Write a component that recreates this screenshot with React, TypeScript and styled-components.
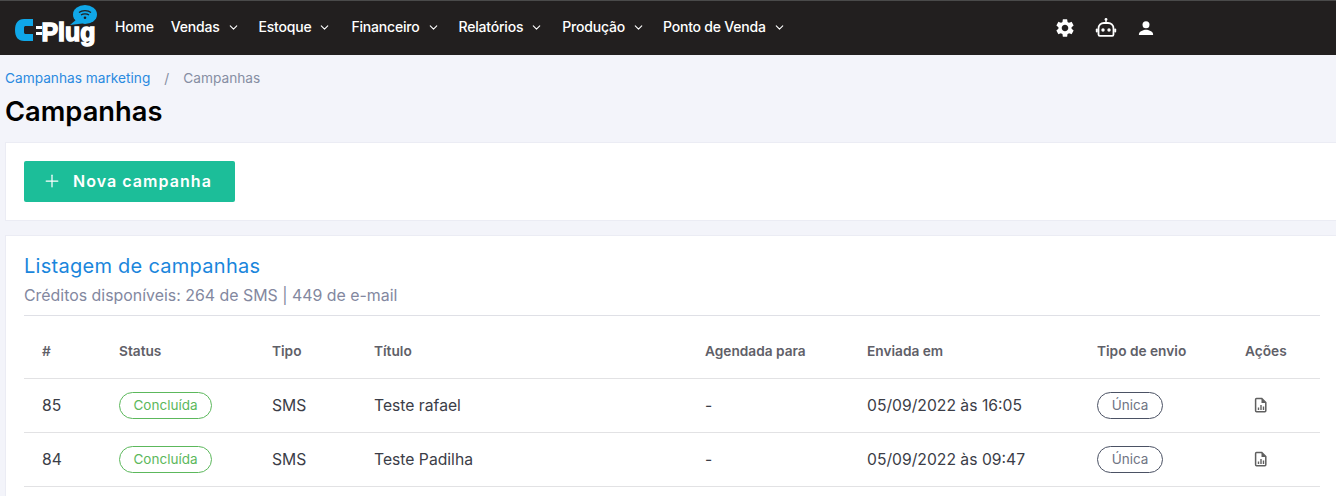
import React from "react";
import styled, { createGlobalStyle } from "styled-components";
import { Plus, ChevronDown } from "lucide-react";

const Global = createGlobalStyle`
  html, body { margin: 0; padding: 0; overflow: hidden; background: #f3f4fa; }
  body { font-family: Inter, "Liberation Sans", sans-serif; }
  * { box-sizing: border-box; }
`;

const Page = styled.div`
  width: 1336px;
  height: 496px;
  overflow: hidden;
  background: #f3f4fa;
`;

const TopBar = styled.header`
  height: 55px;
  background: #221f1f;
  box-shadow: inset 0 1px 0 #4a4a4a;
  display: flex;
  align-items: center;
  padding-left: 14px;
`;

const LogoBox = styled.svg`
  width: 84px;
  height: 46px;
  flex: none;
`;

const Nav = styled.nav`
  display: flex;
  align-items: center;
  margin: 0 0 2px 17px;
  width: 939px;
`;

const NavItem = styled.a<{ $gap: number }>`
  display: flex;
  align-items: center;
  color: #fff;
  font-size: 14px;
  font-weight: 500;
  letter-spacing: -0.2px;
  margin-right: ${(p) => p.$gap}px;
  white-space: nowrap;
  svg { margin-left: 7px; margin-top: 1px; }
`;

const IconTray = styled.div`
  display: flex;
  align-items: center;
  gap: 19px;
  svg { display: block; }
`;

const Main = styled.main`
  padding: 15px 0 0 5px;
  width: 1400px;
`;

const Crumbs = styled.div`
  display: flex;
  font-size: 13.7px;
  line-height: 17px;
  color: #868ea3;
`;

const CrumbLink = styled.a`
  color: #2a8ae0;
`;

const CrumbSep = styled.span`
  margin: 0 14px;
`;

const PageTitle = styled.h1`
  margin: 9px 0 0;
  font-size: 27.3px;
  line-height: 32px;
  font-weight: 600;
  color: #000;
`;

const Card = styled.section`
  background: #fff;
  border: 1px solid #ebecf4;
  border-right: none;
`;

const ActionCard = styled(Card)`
  margin-top: 14px;
  height: 79px;
  padding: 18px 18px;
`;

const ListCard = styled(Card)`
  margin-top: 14px;
  padding: 17px 18px 40px;
`;

const PrimaryButton = styled.button`
  display: flex;
  align-items: center;
  width: 211px;
  height: 41px;
  padding: 0 0 1px 18px;
  border: none;
  border-radius: 2px;
  background: #1cbe99;
  color: #fff;
  font-family: inherit;
  font-size: 16px;
  font-weight: 600;
  letter-spacing: 1.05px;
  svg { margin-right: 11px; }
`;

const ListTitle = styled.h2`
  margin: 0;
  font-size: 20px;
  line-height: 26px;
  font-weight: 400;
  letter-spacing: 0.27px;
  color: #1a86dc;
`;

const Credits = styled.p`
  margin: 7px 0 0;
  font-size: 15.9px;
  line-height: 19px;
  color: #83889f;
  padding-bottom: 10px;
  border-bottom: 1px solid #dfe0e6;
  width: 1296px;
`;

const Table = styled.table`
  width: 1296px;
  table-layout: fixed;
  border-collapse: collapse;
`;

const Th = styled.th`
  height: 62px;
  padding: 9px 0 0 18px;
  text-align: left;
  font-size: 13.7px;
  font-weight: 600;
  color: #5f6068;
  border-bottom: 1px solid #e2e2e4;
`;

const Td = styled.td`
  height: 54px;
  padding: 0 0 0 18px;
  font-size: 15.7px;
  color: #3b3d47;
  border-bottom: 1px solid #e2e2e4;
  white-space: nowrap;
`;

const Pill = styled.span<{ $tone: "green" | "slate"; $w: number }>`
  display: inline-flex;
  align-items: center;
  justify-content: center;
  width: ${(p) => p.$w}px;
  height: 27px;
  border-radius: 14px;
  font-size: 13.5px;
  border: 1px solid ${(p) => (p.$tone === "green" ? "#5cb85c" : "#4b5264")};
  color: ${(p) => (p.$tone === "green" ? "#5cb85c" : "#6f7484")};
  vertical-align: middle;
`;

const ActionIcon = styled.svg`
  display: block;
  margin-left: 9px;
`;

const Logo = () => (
  <LogoBox viewBox="0 0 84 46">
    <path
      d="M10 14h9v7h-7c-1.500 0-2 .5-2 2v4c0 1.500.5 2 2 2h7v7h-9C4 36 1 32 1 25S4 14 10 14z"
      fill="#10a7e8"
    />
    <rect x="22" y="21" width="6" height="3" fill="#fff" />
    <rect x="22" y="27" width="6" height="3" fill="#fff" />
    <text x="27.500" y="36" fontFamily="'Liberation Sans', sans-serif" fontWeight="700" fontSize="26" fill="#fff" stroke="#fff" strokeWidth="1.500" textLength="54" lengthAdjust="spacingAndGlyphs">
      Plug
    </text>
    <ellipse cx="71" cy="9.500" rx="12" ry="9.500" fill="#10a7e8" />
    <path d="M63 14 L56 20 L68 18.500 Z" fill="#10a7e8" />
    <path d="M65 7.500 C68 5 74 5 77 7.500 M67 10 C69 8.500 73 8.500 75 10" stroke="#221f1f" strokeWidth="1.300" fill="none" />
    <circle cx="71" cy="12.800" r="1.300" fill="#221f1f" />
  </LogoBox>
);

const Gear = () => (
  <svg width="22" height="22" viewBox="0 0 24 24" fill="#fff">
    <path d="M19.140 12.940c.04-.3.060-.61.060-.94 0-.32-.02-.64-.07-.94l2.030-1.580a.49.49 0 0 0 .12-.61l-1.920-3.320a.488.488 0 0 0-.59-.22l-2.390.96c-.5-.38-1.030-.7-1.620-.94l-.36-2.540a.484.484 0 0 0-.48-.41h-3.840c-.24 0-.43.170-.47.410l-.36 2.540c-.59.240-1.130.570-1.620.94l-2.390-.96c-.22-.08-.47 0-.59.220L2.740 8.870c-.12.210-.08.470.12.610l2.030 1.580c-.05.300-.09.630-.09.940s.02.640.07.940l-2.030 1.580a.49.49 0 0 0-.12.610l1.920 3.320c.12.220.37.290.59.220l2.390-.96c.5.380 1.030.7 1.620.94l.36 2.540c.05.240.24.410.48.410h3.840c.24 0 .44-.17.470-.41l.36-2.540c.59-.24 1.130-.56 1.620-.94l2.390.96c.22.080.47 0 .59-.22l1.920-3.320c.12-.22.070-.47-.12-.61l-2.010-1.580zM12 15.600c-1.980 0-3.600-1.620-3.600-3.600s1.620-3.600 3.600-3.600 3.600 1.620 3.600 3.600-1.620 3.600-3.600 3.600z" />
  </svg>
);

const Bot = () => (
  <svg width="22" height="22" viewBox="0 0 22 22" fill="none">
    <circle cx="11" cy="2.500" r="1.400" fill="#fff" />
    <path d="M11 3.500V6" stroke="#fff" strokeWidth="1.400" />
    <path d="M3.500 17.500v-6C3.500 8 6 6 9 6h4c3 0 5.500 2 5.500 5.500v6c0 .8-.5 1.300-1.300 1.300H4.800c-.8 0-1.300-.5-1.300-1.300z" stroke="#fff" strokeWidth="1.800" />
    <rect x="0.800" y="11.500" width="2" height="4" rx="1" fill="#fff" />
    <rect x="19.200" y="11.500" width="2" height="4" rx="1" fill="#fff" />
    <circle cx="8" cy="13" r="1.700" fill="#fff" />
    <circle cx="14" cy="13" r="1.700" fill="#fff" />
  </svg>
);

const User = () => (
  <svg width="20" height="20" viewBox="0 0 24 24" fill="#fff">
    <circle cx="12" cy="8" r="4.200" />
    <path d="M3.500 19.500c0-3.600 5.700-5.400 8.500-5.400s8.500 1.800 8.500 5.400v1H3.500z" />
  </svg>
);

const Report = () => (
  <ActionIcon width="14" height="16" viewBox="0 0 14 16" fill="none">
    <path d="M2.500 1.500h5.300l4 4v8.300c0 .5-.4.9-.9.900H2.500c-.5 0-.9-.4-.9-.9V2.400c0-.5.4-.9.900-.9z" stroke="#5f5f5f" strokeWidth="1.500" />
    <path d="M7.500 1.500v4.500h4.300z" fill="#5f5f5f" />
    <path d="M4.500 13v-2.500M7 13V8M9.500 13v-3.500" stroke="#5f5f5f" strokeWidth="1.400" />
  </ActionIcon>
);

const navItems = [
  { label: "Home", gap: 17 },
  { label: "Vendas", chevron: true, gap: 19 },
  { label: "Estoque", chevron: true, gap: 20 },
  { label: "Financeiro", chevron: true, gap: 19 },
  { label: "Relatórios", chevron: true, gap: 19 },
  { label: "Produção", chevron: true, gap: 18 },
  { label: "Ponto de Venda", chevron: true, gap: 0 },
];

const columns: [string, number][] = [
  ["#", 77],
  ["Status", 153],
  ["Tipo", 102],
  ["Título", 331],
  ["Agendada para", 162],
  ["Enviada em", 230],
  ["Tipo de envio", 148],
  ["Ações", 93],
];

const rows = [
  { id: 85, title: "Teste rafael", sent: "05/09/2022 às 16:05" },
  { id: 84, title: "Teste Padilha", sent: "05/09/2022 às 09:47" },
];

export default function App() {
  return (
    <Page>
      <Global />
      <TopBar>
        <Logo />
        <Nav>
          {navItems.map((n) => (
            <NavItem key={n.label} $gap={n.gap}>
              {n.label}
              {n.chevron && <ChevronDown size={13} strokeWidth={2} />}
            </NavItem>
          ))}
        </Nav>
        <IconTray>
          <Gear />
          <Bot />
          <User />
        </IconTray>
      </TopBar>
      <Main>
        <Crumbs>
          <CrumbLink>Campanhas marketing</CrumbLink>
          <CrumbSep>/</CrumbSep>
          <span>Campanhas</span>
        </Crumbs>
        <PageTitle>Campanhas</PageTitle>
        <ActionCard>
          <PrimaryButton>
            <Plus size={20} strokeWidth={1.5} />
            Nova campanha
          </PrimaryButton>
        </ActionCard>
        <ListCard>
          <ListTitle>Listagem de campanhas</ListTitle>
          <Credits>Créditos disponíveis: 264 de SMS | 449 de e-mail</Credits>
          <Table>
            <colgroup>
              {columns.map(([name, w]) => (
                <col key={name} width={w} />
              ))}
            </colgroup>
            <thead>
              <tr>
                {columns.map(([name]) => (
                  <Th key={name}>{name}</Th>
                ))}
              </tr>
            </thead>
            <tbody>
              {rows.map((r) => (
                <tr key={r.id}>
                  <Td>{r.id}</Td>
                  <Td>
                    <Pill $tone="green" $w={93}>Concluída</Pill>
                  </Td>
                  <Td>SMS</Td>
                  <Td>{r.title}</Td>
                  <Td>-</Td>
                  <Td>{r.sent}</Td>
                  <Td>
                    <Pill $tone="slate" $w={66}>Única</Pill>
                  </Td>
                  <Td>
                    <Report />
                  </Td>
                </tr>
              ))}
            </tbody>
          </Table>
        </ListCard>
      </Main>
    </Page>
  );
}
